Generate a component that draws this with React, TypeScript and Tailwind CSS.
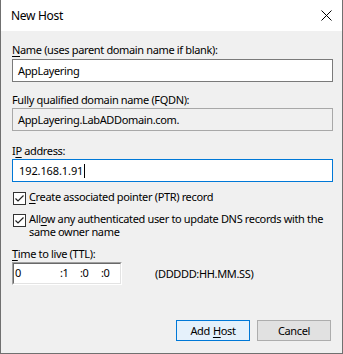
import React from "react";

function Check() {
  return (
    <div className="w-[13px] h-[13px] border border-[#333333] bg-white flex items-center justify-center shrink-0">
      <svg width="11" height="11" viewBox="0 0 11 11">
        <path d="M1.5 5.5 L4 8 L9.5 2.5" fill="none" stroke="#222" strokeWidth="1.2" />
      </svg>
    </div>
  );
}

export default function App() {
  return (
    <div className="w-[343px] h-[354px] bg-[#f0f0f0] border-l border-r border-b border-[#707070] flex flex-col text-[11px] tracking-[-0.35px] text-black font-['Noto_Sans',sans-serif] overflow-hidden">
      <div className="h-[31px] bg-white flex items-center justify-between pl-[10px] pr-[10px] shrink-0">
        <span className="leading-[16px] text-[12px] tracking-[-0.3px]">New Host</span>
        <svg width="11" height="11" viewBox="0 0 11 11">
          <path d="M0.5 0.5 L10.5 10.5 M10.5 0.5 L0.5 10.5" stroke="#000" strokeWidth="1" fill="none" />
        </svg>
      </div>
      <div className="flex flex-col pl-[11px] pr-[9px]">
        <div className="mt-[11px] h-[16px] leading-[16px]">
          <span className="underline underline-offset-2">N</span>ame (uses parent domain name if blank):
        </div>
        <div className="mt-[1px] h-[23px] w-[321px] border border-[#7a7a7a] bg-white flex items-center pl-[5px] leading-[16px]">
          AppLayering
        </div>
        <div className="mt-[10px] h-[16px] leading-[16px]">Fully qualified domain name (FQDN):</div>
        <div className="h-[23px] w-[321px] border border-[#a8a8a8] bg-[#f0f0f0] flex items-center pl-[5px] leading-[16px]">
          AppLayering.LabADDomain.com.
        </div>
        <div className="mt-[12px] h-[16px] leading-[16px]">
          I<span className="underline underline-offset-2">P</span> address:
        </div>
        <div className="h-[23px] w-[321px] border border-[#0078d7] bg-white flex items-center pl-[6px] leading-[16px]">
          <span className="tracking-[-0.1px]">192.168.1.91</span>
          <span className="w-[1px] h-[14px] bg-black ml-[1px]" />
        </div>
        <div className="mt-[10px] flex items-start gap-[3px] ml-[1px]">
          <Check />
          <div className="leading-[12px] -mt-[1px] whitespace-nowrap">
            <span className="underline underline-offset-2">C</span>reate associated pointer (PTR) record
          </div>
        </div>
        <div className="mt-[9px] flex items-start gap-[3px] ml-[1px]">
          <Check />
          <div className="leading-[12.5px] -mt-[1px] whitespace-nowrap">
            All<span className="underline underline-offset-2">o</span>w any authenticated user to update DNS records with the
            <br />
            same owner name
          </div>
        </div>
        <div className="mt-[8px] h-[16px] leading-[16px]">
          <span className="underline underline-offset-2">T</span>ime to live (TTL):
        </div>
        <div className="flex items-center">
          <div className="h-[23px] w-[110px] border border-t-[#a0a0a0] border-l-[#a0a0a0] border-r-white border-b-white">
            <div className="h-full w-full border border-t-[#696969] border-l-[#696969] border-r-[#e3e3e3] border-b-[#e3e3e3] bg-white relative leading-[16px]">
              <span className="absolute left-[1px] top-[1px]">0</span>
              <span className="absolute left-[46px] top-[1px]">:1</span>
              <span className="absolute left-[66px] top-[1px]">:0</span>
              <span className="absolute left-[87px] top-[1px]">:0</span>
            </div>
          </div>
          <div className="ml-[33px] leading-[16px]">(DDDDD:HH.MM.SS)</div>
        </div>
        <div className="mt-[35px] flex justify-end gap-[7px] pr-[2px]">
          <div className="w-[74px] h-[21px] border border-[#0078d7] bg-[#e5f1fb] flex items-center justify-center leading-[16px]">
            Add <span className="underline underline-offset-2 ml-[3px]">H</span>ost
          </div>
          <div className="w-[74px] h-[21px] border border-[#adadad] bg-[#e1e1e1] flex items-center justify-center leading-[16px]">
            Cancel
          </div>
        </div>
      </div>
    </div>
  );
}
